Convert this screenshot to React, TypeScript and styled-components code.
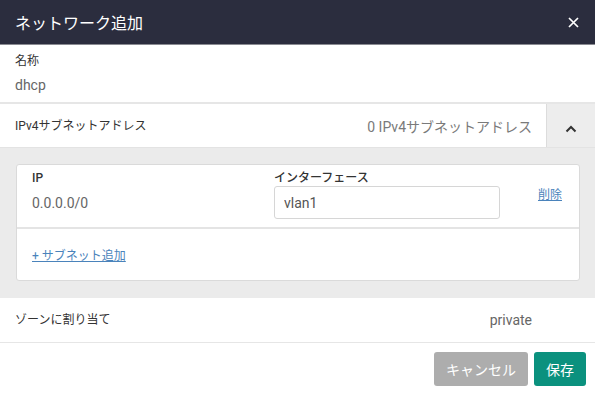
import React from "react";
import styled, { createGlobalStyle } from "styled-components";

const GlobalStyle = createGlobalStyle`
  html, body {
    margin: 0;
    padding: 0;
    background: #fff;
  }
  body {
    font-family: Roboto, "Noto Sans CJK JP", sans-serif;
    color: #333;
  }
`;

const Dialog = styled.div`
  width: 595px;
  height: 394px;
  display: flex;
  flex-direction: column;
  background: #fff;
  overflow: hidden;
`;

const Header = styled.div`
  height: 45px;
  flex-shrink: 0;
  box-sizing: border-box;
  background: #2b2d3e;
  border-bottom: 1px solid #8a8b92;
  display: flex;
  align-items: center;
  justify-content: space-between;
  padding: 0 16px 0 15px;
  color: #fff;
`;

const Title = styled.h1`
  margin: 0;
  font-size: 16px;
  font-weight: 400;
`;

const CloseButton = styled.button`
  border: 0;
  background: none;
  padding: 0;
  width: 11px;
  height: 11px;
  display: flex;
  cursor: pointer;
`;

const NameField = styled.div`
  padding: 8px 15px 7px;
  display: flex;
  flex-direction: column;
  gap: 6px;
  border-bottom: 2px solid #e6e6e6;
`;

const SmallLabel = styled.label<{ $bold?: boolean }>`
  font-size: 12px;
  font-weight: ${(p) => (p.$bold ? 500 : 400)};
  color: #333;
  line-height: 16px;
`;

const Value = styled.span`
  font-size: 14px;
  color: #666;
  line-height: 20px;
`;

const AccordionHeader = styled.div`
  height: 43px;
  flex-shrink: 0;
  display: flex;
  align-items: stretch;
  border-bottom: 1px solid #e3e3e3;
`;

const AccordionTitle = styled.div`
  flex: 1;
  display: flex;
  align-items: center;
  justify-content: space-between;
  padding: 0 14px 0 15px;
`;

const Summary = styled.span`
  font-size: 14px;
  color: #7a7a7a;
`;

const ToggleButton = styled.button`
  width: 49px;
  border: 0;
  border-left: 1px solid #dcdcdc;
  background: #ededed;
  display: flex;
  align-items: center;
  justify-content: center;
  padding: 6px 0 0;
  cursor: pointer;
`;

const AccordionBody = styled.div`
  background: #ebebeb;
  padding: 16px 15px 17px 16px;
`;

const Card = styled.div`
  background: #fff;
  border: 1px solid #dadada;
  border-radius: 3px;
`;

const CardRow = styled.div`
  display: grid;
  grid-template-columns: 242px 226px 1fr;
  align-items: start;
  padding: 5px 0 8px 15px;
  border-bottom: 2px solid #e4e4e4;
  height: 64px;
  box-sizing: border-box;
`;

const Column = styled.div`
  display: flex;
  flex-direction: column;
`;

const IpValue = styled(Value)`
  margin-top: 7px;
`;

const TextInput = styled.input`
  box-sizing: border-box;
  width: 226px;
  height: 33px;
  border: 1px solid #d6d6d6;
  border-radius: 3px;
  padding: 0 9px;
  font: inherit;
  font-size: 14px;
  color: #555;
  outline: none;
`;

const LinkButton = styled.a`
  font-size: 12px;
  color: #4a83bb;
  text-decoration: underline;
  cursor: pointer;
`;

const DeleteLink = styled(LinkButton)`
  justify-self: end;
  margin: 15px 17px 0 0;
`;

const AddRow = styled.div`
  height: 51px;
  display: flex;
  align-items: center;
  padding: 0 15px;
`;

const ZoneRow = styled.div`
  height: 44px;
  flex-shrink: 0;
  display: flex;
  align-items: center;
  justify-content: space-between;
  padding: 0 63px 0 15px;
  border-bottom: 1px solid #e6e6e6;
`;

const Footer = styled.div`
  display: flex;
  justify-content: flex-end;
  gap: 6px;
  padding: 9px 9px 0;
`;

const Button = styled.button<{ $primary?: boolean }>`
  height: 34px;
  border: 0;
  border-radius: 3px;
  padding: 0 12px;
  font-family: inherit;
  font-size: 14px;
  color: #fff;
  background: ${(p) => (p.$primary ? "#0b917e" : "#adadad")};
  cursor: pointer;
`;

const App: React.FC = () => {
  return (
    <Dialog>
      <GlobalStyle />
      <Header>
        <Title>ネットワーク追加</Title>
        <CloseButton aria-label="close">
          <svg width="11" height="11" viewBox="0 0 11 11">
            <path d="M1 1 L10 10 M10 1 L1 10" stroke="#fff" strokeWidth="1.7" />
          </svg>
        </CloseButton>
      </Header>

      <NameField>
        <SmallLabel>名称</SmallLabel>
        <Value>dhcp</Value>
      </NameField>

      <AccordionHeader>
        <AccordionTitle>
          <SmallLabel>IPv4サブネットアドレス</SmallLabel>
          <Summary>0 IPv4サブネットアドレス</Summary>
        </AccordionTitle>
        <ToggleButton aria-label="collapse">
          <svg width="12" height="8" viewBox="0 0 12 8">
            <path d="M1.5 6.5 L6 2 L10.5 6.5" stroke="#333" strokeWidth="2" fill="none" />
          </svg>
        </ToggleButton>
      </AccordionHeader>

      <AccordionBody>
        <Card>
          <CardRow>
            <Column>
              <SmallLabel $bold>IP</SmallLabel>
              <IpValue>0.0.0.0/0</IpValue>
            </Column>
            <Column>
              <SmallLabel $bold>インターフェース</SmallLabel>
              <TextInput defaultValue="vlan1" />
            </Column>
            <DeleteLink>削除</DeleteLink>
          </CardRow>
          <AddRow>
            <LinkButton>+ サブネット追加</LinkButton>
          </AddRow>
        </Card>
      </AccordionBody>

      <ZoneRow>
        <SmallLabel>ゾーンに割り当て</SmallLabel>
        <Value>private</Value>
      </ZoneRow>

      <Footer>
        <Button>キャンセル</Button>
        <Button $primary>保存</Button>
      </Footer>
    </Dialog>
  );
};

export default App;
